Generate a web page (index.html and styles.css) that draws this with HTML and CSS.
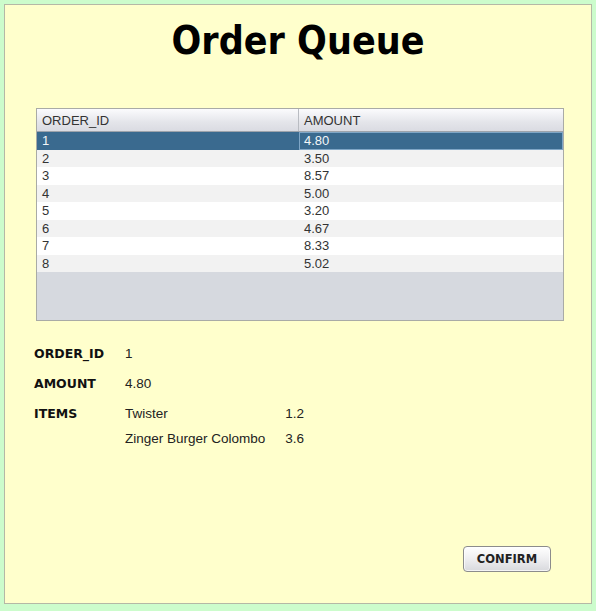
FILE: index.html
```html
<!DOCTYPE html>
<html>
<head>
<meta charset="utf-8">
<link rel="stylesheet" href="styles.css">
</head>
<body>
<div class="panel">
  <h1 class="title">Order Queue</h1>
  <div class="grid">
    <div class="head">
      <div class="hcell first">ORDER_ID</div>
      <div class="hcell">AMOUNT</div>
    </div>
    <div class="row selected"><div class="cell first">1</div><div class="cell focus">4.80</div></div>
    <div class="row alt"><div class="cell first">2</div><div class="cell">3.50</div></div>
    <div class="row"><div class="cell first">3</div><div class="cell">8.57</div></div>
    <div class="row alt"><div class="cell first">4</div><div class="cell">5.00</div></div>
    <div class="row"><div class="cell first">5</div><div class="cell">3.20</div></div>
    <div class="row alt"><div class="cell first">6</div><div class="cell">4.67</div></div>
    <div class="row"><div class="cell first">7</div><div class="cell">8.33</div></div>
    <div class="row alt"><div class="cell first">8</div><div class="cell">5.02</div></div>
  </div>
  <div class="details">
    <div class="label">ORDER_ID</div>
    <div class="value">1</div>
    <div class="label">AMOUNT</div>
    <div class="value">4.80</div>
    <div class="label">ITEMS</div>
    <div class="items">
      <div class="iname">Twister</div><div class="iprice">1.2</div>
      <div class="iname">Zinger Burger Colombo</div><div class="iprice">3.6</div>
    </div>
  </div>
  <div class="actions">
    <button class="btn">CONFIRM</button>
  </div>
</div>
</body>
</html>
```
FILE: styles.css
```css
html, body {
  margin: 0;
  padding: 0;
  background: #ccfccc;
}
body {
  width: 596px;
  height: 611px;
  overflow: hidden;
}
.panel {
  margin: 4px;
  width: 588px;
  height: 600px;
  box-sizing: border-box;
  border: 1px solid #b5b8a6;
  background: #ffffcc;
  display: flex;
  flex-direction: column;
  padding: 0 31px;
}
.title {
  margin: 13px 0 0 0;
  font-family: "DejaVu Sans Condensed", "DejaVu Sans", sans-serif;
  font-weight: bold;
  font-size: 39px;
  line-height: 45px;
  text-align: center;
  color: #000;
}
.grid {
  margin-top: 45px;
  width: 528px;
  height: 213px;
  box-sizing: border-box;
  border: 1px solid #a9aba6;
  background: #d6d9df;
  font-family: "Liberation Sans", Arial, sans-serif;
  font-size: 13px;
  color: #333;
}
.head {
  display: grid;
  grid-template-columns: 262px 1fr;
  height: 23px;
  box-sizing: border-box;
  background: linear-gradient(#fbfbfd, #e4e5ea 60%, #dadbe2);
  border-bottom: 1px solid #9da3ab;
}
.hcell {
  padding-left: 5px;
  padding-top: 1px;
  line-height: 21px;
  color: #333;
}
.hcell.first {
  border-right: 1px solid #b9bcc2;
}
.row {
  display: grid;
  grid-template-columns: 262px 1fr;
  height: 17.5px;
  background: #ffffff;
}
.row.alt {
  background: #f2f2f2;
}
.row.selected {
  background: #3a6a8f;
  color: #f4f6f8;
}
.cell {
  padding-left: 5px;
  padding-top: 1px;
  line-height: 16.5px;
}
.cell.first {
  margin-right: 1px;
}
.cell.focus {
  box-sizing: border-box;
  border: 1px solid #7fa6c6;
  padding-left: 4px;
  padding-top: 0;
  line-height: 15.5px;
}
.details {
  margin-top: 24px;
  margin-left: -2px;
  display: grid;
  grid-template-columns: 91px 1fr;
  row-gap: 13px;
  align-items: start;
}
.label {
  font-family: "DejaVu Sans", sans-serif;
  font-weight: bold;
  font-size: 12.5px;
  line-height: 17px;
  color: #111;
}
.value, .items {
  font-family: "Liberation Sans", Arial, sans-serif;
  font-size: 13.5px;
  line-height: 17px;
  color: #222;
}
.items {
  display: grid;
  grid-template-columns: 155px 24px;
  row-gap: 8px;
}
.iprice {
  text-align: right;
}
.actions {
  margin-top: auto;
  margin-bottom: 31px;
  display: flex;
  justify-content: flex-end;
  padding-right: 9px;
}
.btn {
  width: 88px;
  height: 26px;
  box-sizing: border-box;
  border: 1px solid #8c8c8c;
  border-radius: 4px;
  background: linear-gradient(#ffffff, #eeeef0 50%, #d8d9dd);
  box-shadow: inset 0 0 0 1px rgba(255,255,255,0.7);
  font-family: "DejaVu Sans", sans-serif;
  font-weight: bold;
  font-size: 11.5px;
  color: #222;
  padding: 0;
}
```
